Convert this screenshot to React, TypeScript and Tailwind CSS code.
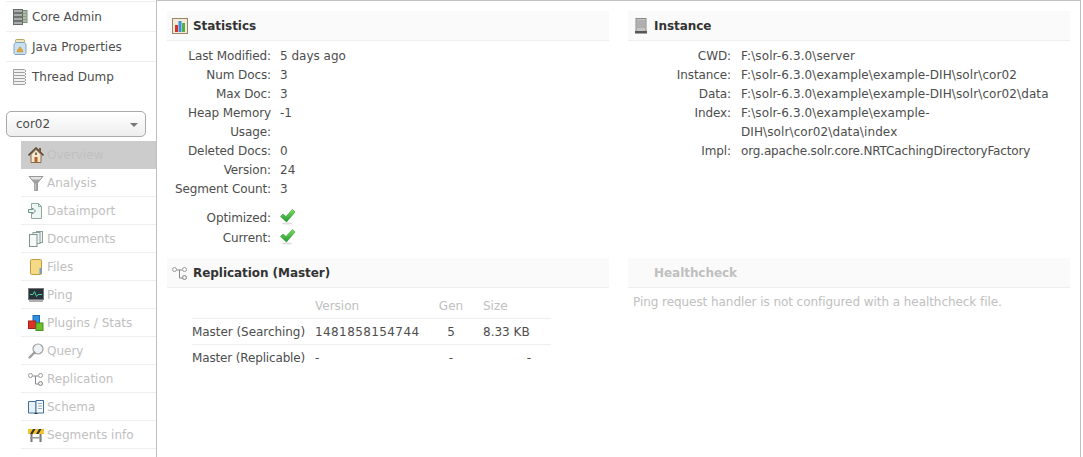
import type { ReactNode } from 'react';

const FONT = "font-['DejaVu_Sans',Verdana,sans-serif]";

/* ---- icons, roughly the old Solr admin sprites ---- */

function ServersIcon() {
  return (
    <svg width="16" height="16" viewBox="0 0 16 16" className="shrink-0">
      <rect x="8" y="1.5" width="7" height="12" fill="#aebdaa" stroke="#7c8a78" />
      <path d="M9 4.5h5M9 7.5h5M9 10.5h5" stroke="#8ca184" />
      <rect x="1.5" y="0.5" width="9" height="15" fill="#a9adab" stroke="#666b68" />
      <path d="M2 3.5h8M2 4.5h8M2 7.5h8M2 8.5h8M2 11.5h8M2 12.5h8" stroke="#6f7472" />
    </svg>
  );
}

function JarIcon() {
  return (
    <svg width="16" height="16" viewBox="0 0 16 16" className="shrink-0">
      <rect x="3.5" y="0.5" width="9" height="3" rx="1" fill="#efe6bb" stroke="#b5a75f" />
      <path d="M3.5 3.5h9l1.5 2v9l-1 1H3l-1-1v-9z" fill="#c9e0f2" stroke="#7fa4c4" />
      <path d="M5 13l1-3h1l.5-2h1l.5 2h1l1 3z" fill="#e2a93a" stroke="#c08a20" strokeWidth="0.5" />
    </svg>
  );
}

function StackIcon() {
  return (
    <svg width="16" height="16" viewBox="0 0 16 16" className="shrink-0">
      {[0, 3, 6, 9, 12].map((y) => (
        <path
          key={y}
          d={`M1.5 ${y + 0.5}h11l1.5 1.5-1.5 1.5h-11z`}
          fill="#f2f2f2"
          stroke="#a0a0a0"
        />
      ))}
    </svg>
  );
}

function HomeIcon() {
  return (
    <svg width="16" height="16" viewBox="0 0 16 16" className="shrink-0">
      <path d="M3 7.5v8h10v-8L8 2.5z" fill="#f5e8d2" stroke="#8a6a4a" />
      <path d="M0.5 8.5L8 1l7.5 7.5" fill="none" stroke="#5d4a3a" strokeWidth="1.6" />
      <rect x="11" y="1" width="2" height="4" fill="#7a5a3a" />
      <rect x="6.5" y="10" width="3" height="5.5" fill="#b5622a" />
      <rect x="7" y="5.5" width="2" height="2.5" fill="#8a6b4c" />
    </svg>
  );
}

function FunnelIcon() {
  return (
    <svg width="16" height="16" viewBox="0 0 16 16" className="shrink-0">
      <path d="M1 1.5h14L9.5 8v7.5h-3V8z" fill="#a2a2a2" stroke="#808080" strokeWidth="0.7" />
      <path d="M2 2h12l-2 2.5H4z" fill="#e2e2e2" />
      <path d="M7.2 8.5v6.5" stroke="#d0d0d0" />
    </svg>
  );
}

function ImportIcon() {
  return (
    <svg width="16" height="16" viewBox="0 0 16 16" className="shrink-0">
      <path d="M3.5 0.5h7l3 3v12h-10z" fill="#eef6f4" stroke="#8fa8a4" />
      <path d="M10.5 0.5v3h3" fill="none" stroke="#8fa8a4" />
      <path d="M0.5 6.5h4V5l3 3-3 3V9.5h-4z" fill="#eef6f4" stroke="#6f928c" />
    </svg>
  );
}

function DocsIcon() {
  return (
    <svg width="16" height="16" viewBox="0 0 16 16" className="shrink-0">
      <rect x="8.5" y="0.5" width="6" height="11" fill="#eef3f2" stroke="#8a9f9c" />
      <rect x="5" y="1.5" width="7" height="11" fill="#eef3f2" stroke="#8a9f9c" />
      <rect x="1.5" y="3.5" width="7.5" height="12" fill="#f6f9f8" stroke="#7d9490" />
    </svg>
  );
}

function FolderIcon() {
  return (
    <svg width="16" height="16" viewBox="0 0 16 16" className="shrink-0">
      <rect x="2.5" y="0.5" width="11" height="15" rx="1" fill="#f5d985" stroke="#c49c40" />
      <path d="M12.5 9v6" stroke="#6fa3cf" strokeWidth="2" />
    </svg>
  );
}

function PingIcon() {
  return (
    <svg width="16" height="16" viewBox="0 0 16 16" className="shrink-0">
      <rect x="0.5" y="1.5" width="15" height="11" fill="#27323a" stroke="#777" />
      <path d="M2 7.5h3l1.5-3 2 5L10 7.5h4" fill="none" stroke="#4fd0a0" />
      <rect x="1" y="13" width="14" height="2" fill="#b0b0b0" />
    </svg>
  );
}

function PluginsIcon() {
  return (
    <svg width="16" height="16" viewBox="0 0 16 16" className="shrink-0">
      <rect x="5" y="0.5" width="6.5" height="7.5" fill="#2d8fe0" stroke="#1c6bb0" />
      <rect x="0.5" y="6" width="7" height="7.5" fill="#e0302a" stroke="#a81f1a" />
      <rect x="8" y="8" width="7" height="7.5" fill="#6cc02c" stroke="#4b8e1a" />
    </svg>
  );
}

function QueryIcon() {
  return (
    <svg width="16" height="16" viewBox="0 0 16 16" className="shrink-0">
      <circle cx="10" cy="6" r="5" fill="#eef3f7" stroke="#a0a0a0" strokeWidth="1.2" />
      <path d="M6.5 9.5L1.5 14.5" stroke="#9a9a9a" strokeWidth="2.2" strokeLinecap="round" />
    </svg>
  );
}

function ReplicationIcon() {
  return (
    <svg width="16" height="16" viewBox="0 0 16 16" className="shrink-0">
      <path d="M4.5 5H10M7.5 5v8H11" fill="none" stroke="#888" />
      <circle cx="2.5" cy="4.5" r="2" fill="#fff" stroke="#999" />
      <circle cx="12.5" cy="4.5" r="2" fill="#fff" stroke="#999" />
      <circle cx="12.5" cy="12.5" r="2" fill="#eee" stroke="#888" />
    </svg>
  );
}

function SchemaIcon() {
  return (
    <svg width="16" height="16" viewBox="0 0 16 16" className="shrink-0">
      <path d="M0.5 2.5h7.5v11.5H0.5z" fill="#e8f1f8" stroke="#3f6f9c" />
      <path d="M8 1.5h7.5v12.5H8z" fill="#f6fafc" stroke="#3f6f9c" />
      <path d="M10 4.5h4M10 7h4M10 9.5h4" stroke="#9ab0c0" />
      <path d="M6.5 14.5h3" stroke="#333" />
    </svg>
  );
}

function BarrierIcon() {
  return (
    <svg width="16" height="16" viewBox="0 0 16 16" className="shrink-0">
      <rect x="0" y="2" width="16" height="5" fill="#f2c230" />
      <path d="M2 7l3-5h2.5l-3 5zM8 7l3-5h2.5l-3 5z" fill="#333" />
      <rect x="2.5" y="7" width="2" height="8" fill="#777" />
      <rect x="11.5" y="7" width="2" height="8" fill="#777" />
      <rect x="2" y="10" width="12" height="1.5" fill="#999" />
    </svg>
  );
}

function ChartIcon() {
  return (
    <svg width="16" height="16" viewBox="0 0 16 16" className="shrink-0">
      <rect x="0.5" y="0.5" width="15" height="15" fill="#f3ead8" stroke="#9a8468" />
      <rect x="3" y="7" width="3" height="7" fill="#d8302a" />
      <rect x="6.5" y="3" width="3" height="11" fill="#3f8fdc" />
      <rect x="10" y="5" width="3" height="9" fill="#55b04a" />
    </svg>
  );
}

function ServerIcon() {
  return (
    <svg width="16" height="16" viewBox="0 0 16 16" className="shrink-0">
      <rect x="3" y="0.5" width="10" height="13" fill="#c4c4c4" stroke="#8a8a8a" />
      <path d="M4 3h8M4 5h8M4 7h8M4 9h8" stroke="#9a9a9a" />
      <rect x="2" y="13" width="12" height="2.5" fill="#555" />
    </svg>
  );
}

function CheckIcon() {
  return (
    <svg width="16" height="16" viewBox="0 0 16 16" className="shrink-0">
      <defs>
        <linearGradient id="check" x1="0" y1="0" x2="0" y2="1">
          <stop offset="0" stopColor="#7fe05f" />
          <stop offset="1" stopColor="#1f9a2f" />
        </linearGradient>
      </defs>
      <ellipse cx="7" cy="14.5" rx="5" ry="1" fill="#dddddd" />
      <path
        d="M0.5 7.5l2.5-2.5 3 2.5L12.5 0.5 15 3 6.5 13z"
        fill="url(#check)"
        stroke="#2b8f2b"
        strokeWidth="0.6"
      />
    </svg>
  );
}

const topNav = [
  { label: 'Core Admin', icon: <ServersIcon /> },
  { label: 'Java Properties', icon: <JarIcon /> },
  { label: 'Thread Dump', icon: <StackIcon /> },
];

const coreNav = [
  { label: 'Overview', icon: <HomeIcon /> },
  { label: 'Analysis', icon: <FunnelIcon /> },
  { label: 'Dataimport', icon: <ImportIcon /> },
  { label: 'Documents', icon: <DocsIcon /> },
  { label: 'Files', icon: <FolderIcon /> },
  { label: 'Ping', icon: <PingIcon /> },
  { label: 'Plugins / Stats', icon: <PluginsIcon /> },
  { label: 'Query', icon: <QueryIcon /> },
  { label: 'Replication', icon: <ReplicationIcon /> },
  { label: 'Schema', icon: <SchemaIcon /> },
  { label: 'Segments info', icon: <BarrierIcon /> },
];

const stats = [
  ['Last Modified:', '5 days ago'],
  ['Num Docs:', '3'],
  ['Max Doc:', '3'],
  ['Heap Memory Usage:', '-1'],
  ['Deleted Docs:', '0'],
  ['Version:', '24'],
  ['Segment Count:', '3'],
];

const instance = [
  ['CWD:', 'F:\\solr-6.3.0\\server', 'tracking-[0.1px]'],
  ['Instance:', 'F:\\solr-6.3.0\\example\\example-DIH\\solr\\cor02', 'tracking-[0.1px]'],
  ['Data:', 'F:\\solr-6.3.0\\example\\example-DIH\\solr\\cor02\\data', 'tracking-[0.1px]'],
  ['Index:', 'F:\\solr-6.3.0\\example\\example-DIH\\solr\\cor02\\data\\index', 'tracking-[0.1px]'],
  ['Impl:', 'org.apache.solr.core.NRTCachingDirectoryFactory', 'tracking-[-0.15px]'],
];

function BlockHeader({ icon, title, muted }: { icon?: ReactNode; title: string; muted?: boolean }) {
  return (
    <div className="flex h-[30px] items-center gap-[5px] border-b border-[#eeeeee] bg-[#fafafa] pl-[5px]">
      <span className="flex w-[16px] justify-center">{icon}</span>
      <h2 className={`text-[12px] font-bold tracking-[-0.05px] ${muted ? 'text-[#c0c0c0]' : 'text-[#333333]'}`}>{title}</h2>
    </div>
  );
}

function Rows({ rows, columns }: { rows: string[][]; columns: string }) {
  return (
    <dl className={`grid ${columns} text-[12px] leading-[19px]`}>
      {rows.map(([label, value, tracking]) => (
        <div key={label} className="contents">
          <dt className="text-right tracking-[-0.1px]">{label}</dt>
          <dd className={`break-words ${tracking ?? ''}`}>{value}</dd>
        </div>
      ))}
    </dl>
  );
}

export default function App() {
  return (
    <div className={`flex h-[457px] w-[1083px] overflow-hidden bg-white text-[#4d4d4d] ${FONT}`}>
      <aside className="w-[156px] shrink-0">
        <nav className="ml-[6px] mt-[1px] border-t border-[#eeeeee]">
          {topNav.map((item, i) => (
            <div
              key={item.label}
              className={`flex h-[30px] items-center gap-[4px] pl-[6px] text-[12px] text-[#4d4d4d] ${
                i < 2 ? 'border-b border-[#eeeeee]' : ''
              }`}
            >
              {item.icon}
              {item.label}
            </div>
          ))}
        </nav>
        <div className="ml-[6px] mt-[19px] flex h-[26px] w-[140px] items-center justify-between rounded-[5px] border border-[#aaaaaa] bg-gradient-to-b from-white to-[#eeeeee] pl-[9px] pr-[7px] text-[12px]">
          cor02
          <span className="mt-[2px] h-0 w-0 border-x-[4px] border-t-[4px] border-x-transparent border-t-[#777777]" />
        </div>
        <nav className="ml-[21px] mt-[4px]">
          {coreNav.map((item, i) => (
            <div
              key={item.label}
              className={`flex h-[28px] items-center gap-[3px] border-b pl-[7px] text-[12px] text-[#c0c0c0] ${
                i === 0 ? 'border-[#cccccc] bg-[#cccccc]' : 'border-[#eeeeee]'
              }`}
            >
              {item.icon}
              {item.label}
            </div>
          ))}
        </nav>
      </aside>

      <main className="flex h-[457px] w-[925px] shrink-0 flex-col border-x border-t border-[#c0c0c0] pl-[10px] pt-[10px]">
        <div className="grid grid-cols-[442px_442px] gap-x-[19px]">
          <section className="h-[247px]">
            <BlockHeader icon={<ChartIcon />} title="Statistics" />
            <div className="pt-[6px]">
              <Rows rows={stats} columns="grid-cols-[104px_1fr] gap-x-[9px]" />
              <div className="mt-[10px] grid grid-cols-[104px_1fr] gap-x-[9px] gap-y-[1px] text-[12px] leading-[19px]">
                <span className="text-right tracking-[-0.1px]">Optimized:</span>
                <CheckIcon />
                <span className="text-right tracking-[-0.1px]">Current:</span>
                <CheckIcon />
              </div>
            </div>
          </section>

          <section>
            <BlockHeader icon={<ServerIcon />} title="Instance" />
            <div className="pt-[6px] pr-[10px]">
              <Rows rows={instance} columns="grid-cols-[103px_1fr] gap-x-[10px]" />
            </div>
          </section>

          <section>
            <BlockHeader icon={<ReplicationIcon />} title="Replication (Master)" />
            <table className="ml-[25px] mt-[4px] w-[359px] table-fixed text-[12px]">
              <colgroup>
                <col className="w-[113px]" />
                <col className="w-[124px]" />
                <col className="w-[44px]" />
                <col className="w-[78px]" />
              </colgroup>
              <thead>
                <tr className="h-[26px] border-b border-[#eeeeee] text-[#c0c0c0]">
                  <th />
                  <th className="pl-[10px] pt-[2px] text-left font-normal">Version</th>
                  <th className="pt-[2px] text-center font-normal">Gen</th>
                  <th className="pl-[10px] pt-[2px] text-left font-normal">Size</th>
                </tr>
              </thead>
              <tbody>
                <tr className="h-[26px] border-b border-[#eeeeee]">
                  <td className="pt-[1px] text-right tracking-[-0.05px] whitespace-nowrap">Master (Searching)</td>
                  <td className="pl-[10px] pt-[1px] tracking-[0.4px]">1481858154744</td>
                  <td className="pt-[1px] text-center">5</td>
                  <td className="pl-[10px] pt-[1px]">8.33 KB</td>
                </tr>
                <tr className="h-[26px]">
                  <td className="pt-[1px] text-right tracking-[-0.15px] whitespace-nowrap">Master (Replicable)</td>
                  <td className="pl-[10px] pt-[1px]">-</td>
                  <td className="pt-[1px] text-center">-</td>
                  <td className="pr-[20px] pt-[1px] text-right">-</td>
                </tr>
              </tbody>
            </table>
          </section>

          <section>
            <BlockHeader title="Healthcheck" muted />
            <p className="pl-[5px] pt-[5px] text-[12px] leading-[19px] tracking-[-0.06px] text-[#c0c0c0]">
              Ping request handler is not configured with a healthcheck file.
            </p>
          </section>
        </div>
      </main>
    </div>
  );
}
